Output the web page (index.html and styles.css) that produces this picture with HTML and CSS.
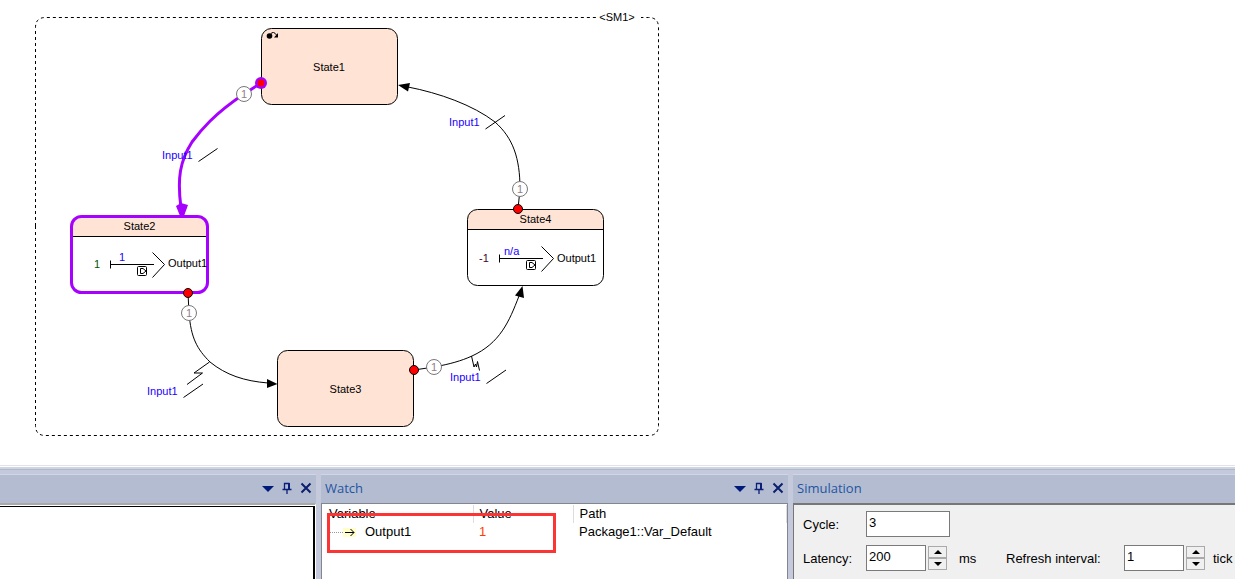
FILE: index.html
```html
<!DOCTYPE html>
<html lang="en">
<head>
<meta charset="utf-8">
<title>State machine simulation</title>
<link rel="stylesheet" href="styles.css">
</head>
<body>
<main class="canvas">
<svg class="diagram" width="700" height="465" viewBox="0 0 700 465" role="img" aria-label="State machine SM1">
  <defs>
    <g id="operator">
      <path d="M.5-3.500V4.500M0 .5H44M42.500-11.500 54.500.5 42.500 13.500"/>
      <rect x="27.500" y="2.500" width="9" height="9" rx="1"/>
      <path d="M30.500 4.500V9.500H33L36 7 33 4.500Z"/>
    </g>
    <g id="priority">
      <circle r="7.500" class="priority-ring"/>
      <text class="priority-text" y="4">1</text>
    </g>
    <circle id="port" r="4.500" class="port"/>
  </defs>

  <path class="frame" d="M35.500 226V27.500Q35.500 17.500 45.500 17.500H596"/>
  <path class="frame" d="M35.500 226V425.500Q35.500 435.500 45.500 435.500H648.500Q658.500 435.500 658.500 425.500V27.500Q658.500 17.500 648.500 17.500H641"/>
  <text class="caption" x="617" y="21">&lt;SM1&gt;</text>

  <g class="state">
    <rect x="261.500" y="28.500" width="136" height="76" rx="10" class="fill"/>
    <circle cx="269.500" cy="36" r="2.800" class="solid"/>
    <path d="M270.500 34Q273.500 30.500 276.500 35"/>
    <path class="solid" d="M278 33V37.500H274Z"/>
    <text class="caption" x="329" y="71">State1</text>
  </g>
  <g class="state">
    <rect x="277.500" y="350.500" width="136" height="76" rx="10" class="fill"/>
    <text class="caption" x="345.500" y="393">State3</text>
  </g>
  <g class="state">
    <path class="title-fill" d="M467.500 229.500V219.500Q467.500 209.500 477.500 209.500H593.500Q603.500 209.500 603.500 219.500V229.500Z"/>
    <path d="M467.500 229.500H603.500"/>
    <rect x="467.500" y="209.500" width="136" height="76" rx="10"/>
    <text class="caption" x="535.500" y="223">State4</text>
    <use href="#operator" x="499" y="258"/>
    <text class="literal" x="479" y="262">-1</text>
    <text class="value" x="504" y="255">n/a</text>
    <text x="557" y="262">Output1</text>
  </g>
  <g class="state">
    <path class="title-fill" d="M71.500 236.500V226.500Q71.500 216.500 81.500 216.500H197.500Q207.500 216.500 207.500 226.500V236.500Z"/>
    <path d="M71.500 236.500H207.500"/>
    <rect x="71.500" y="216.500" width="136" height="76" rx="10" class="active-line"/>
    <text class="caption" x="139.500" y="230">State2</text>
    <use href="#operator" x="110" y="264"/>
    <text class="constant" x="94" y="268">1</text>
    <text class="value" x="119" y="261">1</text>
    <text x="168" y="267">Output1</text>
  </g>

  <path class="active-line" d="M261 83 244 94C214 114 201 130 192 142 180 161 177 178 181 208"/>
  <path class="active-fill" d="M176 206 181 203 188 205 184 216H180Z"/>
  <path class="link" d="M188 293 189 313C191 338 197 349 210 362 226 375 244 381 268 383"/>
  <path class="solid" d="M277.500 384 267 379V388Z"/>
  <path class="link" d="M414 370 434 367C450 364 461 361 472 356 500 343 509 322 519 296"/>
  <path class="solid" d="M522.500 286 524 298 515 295.500Z"/>
  <path class="link" d="M518 209 520 189C520 158 513 138 495 122 473 105 439 93 408 87"/>
  <path class="solid" d="M398 85 410 83 408 91.500Z"/>

  <path class="link" d="M198.500 161.500 217.500 148.500M485.500 129 505 115.500M183.500 397.500 203 384M486.500 383.500 506 370M209.500 362 194 373H202.500L187 384.500M471.500 356 474 367 475.500 364 476.500 367 477.500 361.500 479.500 370.500"/>
  <text class="value" x="162" y="159">Input1</text>
  <text class="value" x="449" y="126">Input1</text>
  <text class="value" x="147" y="395">Input1</text>
  <text class="value" x="450" y="381">Input1</text>

  <circle cx="261" cy="83" r="6" class="active-fill"/>
  <circle cx="261" cy="83" r="3.500" class="red"/>
  <use href="#port" x="188" y="293"/>
  <use href="#port" x="414" y="370"/>
  <use href="#port" x="518" y="209"/>
  <use href="#priority" x="244" y="94"/>
  <use href="#priority" x="189" y="313"/>
  <use href="#priority" x="434" y="367"/>
  <use href="#priority" x="520" y="189"/>
</svg>
</main>

<svg class="symbols" aria-hidden="true">
  <symbol id="menu" viewBox="0 0 12 12"><path d="M0 4H12L6 10Z" fill="#001a7a"/></symbol>
  <symbol id="pin" viewBox="0 0 12 12"><path d="M3.500 7V1.500H8.500M1.500 7.500H10.500M6 8V12" fill="none" stroke="#0b1f78" stroke-width="1.300"/><path d="M8 1V7" stroke="#0b1f78" stroke-width="2"/></symbol>
  <symbol id="close" viewBox="0 0 12 12"><path d="M1.500 1.500 10.500 10.500M10.500 1.500 1.500 10.500" stroke="#0b1f6c" stroke-width="2"/></symbol>
  <symbol id="up" viewBox="0 0 8 4"><path d="M0 4 4 0 8 4Z"/></symbol>
  <symbol id="down" viewBox="0 0 8 4"><path d="M0 0 4 4 8 0Z"/></symbol>
</svg>

<div class="dock">
  <section class="panel" aria-label="Output">
    <header class="panel-head">
      <div class="tools">
        <button class="tool" aria-label="Menu"><svg class="glyph"><use href="#menu"/></svg></button>
        <button class="tool" aria-label="Pin"><svg class="glyph"><use href="#pin"/></svg></button>
        <button class="tool" aria-label="Close"><svg class="glyph"><use href="#close"/></svg></button>
      </div>
    </header>
    <div class="output-frame"><div class="output-body"></div></div>
  </section>

  <section class="panel">
    <header class="panel-head">
      <h2 class="panel-title">Watch</h2>
      <div class="tools">
        <button class="tool" aria-label="Menu"><svg class="glyph"><use href="#menu"/></svg></button>
        <button class="tool" aria-label="Pin"><svg class="glyph"><use href="#pin"/></svg></button>
        <button class="tool" aria-label="Close"><svg class="glyph"><use href="#close"/></svg></button>
      </div>
    </header>
    <div class="watch-body">
      <table class="watch-table">
        <thead><tr><th class="col-variable">Variable</th><th class="col-value">Value</th><th>Path</th></tr></thead>
        <tbody><tr>
          <td><span class="tree-item"><span class="branch"></span><svg class="arrow" viewBox="0 0 13 9"><path d="M2 4.500H11M7.500 1 11 4.500 7.500 8" fill="none" stroke="#000"/></svg>Output1</span></td>
          <td class="changed">1</td>
          <td>Package1::Var_Default</td>
        </tr></tbody>
      </table>
      <div class="highlight"></div>
    </div>
  </section>

  <section class="panel">
    <header class="panel-head"><h2 class="panel-title">Simulation</h2></header>
    <form class="sim-body">
      <div class="sim-row">
        <label class="sim-label" for="cycle">Cycle:</label>
        <input class="field field-wide" id="cycle" value="3">
      </div>
      <div class="sim-row">
        <label class="sim-label" for="latency">Latency:</label>
        <input class="field" id="latency" value="200">
        <span class="spinner">
          <button type="button" class="step" aria-label="Increase latency"><svg class="step-icon"><use href="#up"/></svg></button>
          <button type="button" class="step" aria-label="Decrease latency"><svg class="step-icon"><use href="#down"/></svg></button>
        </span>
        <span class="unit unit-ms">ms</span>
        <label class="refresh-label" for="refresh">Refresh interval:</label>
        <input class="field" id="refresh" value="1">
        <span class="spinner">
          <button type="button" class="step" aria-label="Increase interval"><svg class="step-icon"><use href="#up"/></svg></button>
          <button type="button" class="step" aria-label="Decrease interval"><svg class="step-icon"><use href="#down"/></svg></button>
        </span>
        <span class="unit">tick</span>
      </div>
    </form>
  </section>
</div>
</body>
</html>
```
FILE: styles.css
```css
* { box-sizing: border-box; }
body {
  margin: 0;
  height: 100vh;
  display: flex;
  flex-direction: column;
  overflow: hidden;
  background: #fff;
  color: #000;
  font: 13px "Liberation Sans", Arial, sans-serif;
}
.symbols { display: none; }

.canvas { flex: none; }
.diagram { display: block; font-size: 11px; }
.diagram path, .diagram rect { fill: none; stroke: #000; }
.diagram .frame { stroke-dasharray: 3 3; }
.diagram .fill { fill: #ffe3d5; }
.diagram .title-fill { fill: #ffe3d5; stroke: none; }
.diagram .solid { fill: #000; stroke: none; }
.diagram .active-line { stroke: #a600ff; stroke-width: 3; }
.diagram .active-fill { fill: #a600ff; stroke: none; }
.red { fill: #f00; }
.port { fill: #f00; stroke: #000; }
.priority-ring { fill: #fff; stroke: #777; }
.priority-text { fill: #908088; text-anchor: middle; }
.caption { text-anchor: middle; }
.value { fill: #20f; }
.constant { fill: #050; }
.literal { fill: #403; }

.dock {
  flex: 1;
  display: grid;
  grid-template-columns: 316px 467px minmax(0, 1fr);
  column-gap: 5px;
  min-height: 114px;
  padding-top: 4px;
  border-top: 1px solid #e5e0e5;
  background: linear-gradient(#fff 1px, #cdd5e3 1px 3px, #afbac7 3px 4px, #c4c9db 4px);
}
.panel {
  display: flex;
  flex-direction: column;
  min-width: 0;
  padding-top: 4px;
}
.panel-head {
  flex: none;
  display: flex;
  align-items: center;
  height: 29px;
  padding: 0 4px 2px;
  border-top: 1px solid #cdd7e6;
  background: #b4bcd2;
}
.panel-title {
  margin: 0;
  color: #1f55a0;
  font: 13px "Open Sans", "Noto Sans", sans-serif;
}
.tools { display: flex; gap: 7px; margin-left: auto; }
.tool { padding: 0; border: 0; background: none; }
.glyph { display: block; width: 12px; height: 12px; }

.output-frame {
  flex: 1;
  display: flex;
  border-top: 2px solid #aaa9a8;
  border-right: 1px solid #fff;
  padding-top: 1px;
  background: #fff;
}
.output-body { flex: 1; border-top: 1px solid #000; border-right: 2px solid #000; }

.watch-body {
  flex: 1;
  position: relative;
  padding-top: 1px;
  border: 1px solid #83868f;
  border-bottom: 0;
  background: #fff;
}
.watch-table {
  width: 100%;
  border-collapse: collapse;
  table-layout: fixed;
  text-align: left;
}
.watch-table th, .watch-table td {
  height: 18px;
  padding: 0 6px;
  font-weight: 400;
  line-height: 18px;
}
.watch-table th { border-right: 1px solid #ddd; }
.watch-table .col-variable { width: 151px; padding-left: 7px; }
.col-value { width: 100px; }
.tree-item { display: flex; align-items: center; }
.branch { width: 15px; border-top: 1px dotted #999; }
.arrow { width: 13px; height: 9px; margin-right: 9px; background: #ffc; }
.watch-table .changed { color: #ff3c00; }
.highlight {
  position: absolute;
  left: 5px;
  top: 9px;
  width: 229px;
  height: 40px;
  border: 3px solid #fb3434;
}

.sim-body {
  flex: 1;
  display: flex;
  flex-direction: column;
  gap: 8px;
  padding: 6px 0 0 9px;
  border-top: 2px solid #777;
  border-left: 1px solid #777;
  background: #f0f0f0;
}
.sim-row { display: flex; align-items: center; }
.sim-label { width: 63px; }
.field {
  width: 60px;
  height: 26px;
  padding: 0 2px 3px;
  border: 1px solid #7a7a7a;
  background: #fff;
  font: 13px "Liberation Sans", Arial, sans-serif;
}
.field-wide { width: 84px; }
.spinner { display: flex; flex-direction: column; width: 19px; margin-left: 2px; }
.step {
  display: flex;
  align-items: center;
  justify-content: center;
  height: 12px;
  padding: 0;
  border: 1px solid #aaa;
  background: #f0f0f0;
}
.step-icon { width: 8px; height: 4px; }
.unit { margin-left: 8px; }
.unit-ms { width: 34px; margin-left: 12px; }
.refresh-label { width: 118px; margin-left: 13px; }
```
